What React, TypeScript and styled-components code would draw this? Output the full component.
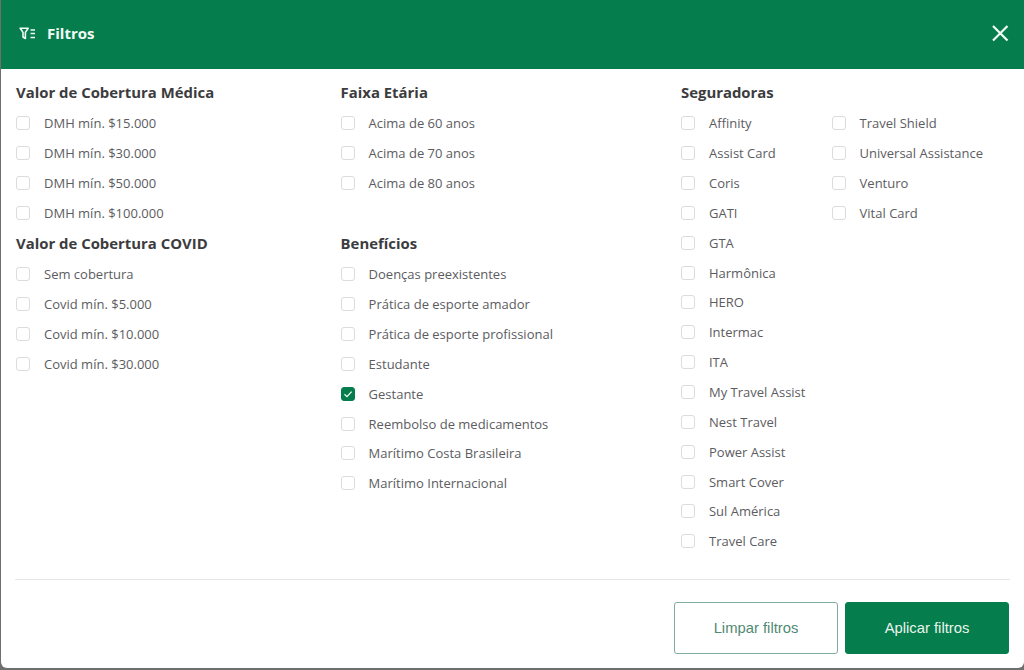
import React from 'react';
import styled, { createGlobalStyle } from 'styled-components';

const GlobalStyle = createGlobalStyle`
  html, body {
    margin: 0;
    padding: 0;
    background: #6f6f6f;
    font-family: 'Open Sans', sans-serif;
  }
  * { box-sizing: border-box; }
`;

const Modal = styled.div`
  width: 1023px;
  height: 668px;
  margin-left: 1px;
  background: #ffffff;
  border-radius: 0 0 6px 6px;
  overflow: hidden;
  display: flex;
  flex-direction: column;
`;

const Header = styled.header`
  height: 68.5px;
  flex-shrink: 0;
  background: #067d4c;
  display: flex;
  align-items: center;
  justify-content: space-between;
  padding: 0 14px 0 18px;
`;

const HeaderTitle = styled.div`
  display: flex;
  align-items: center;
  gap: 11px;
  color: #f2fbf6;
  font-size: 15px;
  font-weight: 700;
  margin-top: -2px;
`;

const CloseButton = styled.button`
  border: 0;
  padding: 0;
  margin-top: -2px;
  background: transparent;
  display: flex;
`;

const Body = styled.div`
  display: flex;
  padding: 8.5px 14px 0 14px;
  height: 510.5px;
`;

const Column = styled.div<{ $width: number }>`
  width: ${(p) => p.$width}px;
  flex-shrink: 0;
`;

const Heading = styled.h3`
  margin: 0;
  padding-left: 1px;
  height: 31.4px;
  line-height: 30.5px;
  font-size: 14.9px;
  font-weight: 700;
  color: #3c3c3e;
`;

const SubColumns = styled.div`
  display: flex;
`;

const SubColumn = styled.div`
  width: 150.6px;
`;

const Spacer = styled.div`
  height: 30px;
`;

const Row = styled.label`
  height: 29.86px;
  display: flex;
  align-items: center;
  gap: 14px;
  padding-left: 1px;
  font-size: 13px;
  white-space: nowrap;
  color: #5c5c5f;
`;

const Box = styled.span<{ $checked?: boolean }>`
  width: 14px;
  height: 14px;
  flex-shrink: 0;
  border-radius: 3px;
  display: flex;
  align-items: center;
  justify-content: center;
  border: 1.5px solid ${(p) => (p.$checked ? '#067d4c' : '#dcdcdc')};
  background: ${(p) => (p.$checked ? '#067d4c' : '#ffffff')};
`;

const Divider = styled.hr`
  margin: 0 14px;
  border: 0;
  height: 1px;
  background: #e6e6e6;
`;

const Footer = styled.footer`
  display: flex;
  justify-content: flex-end;
  gap: 7px;
  padding: 22px 15px 0 0;
`;

const ActionButton = styled.button<{ $primary?: boolean }>`
  width: 164px;
  height: 52px;
  padding: 0 0 1px;
  border-radius: 3px;
  font-family: 'Liberation Sans', Arial, sans-serif;
  font-size: 14.8px;
  border: 1px solid ${(p) => (p.$primary ? '#067d4c' : '#7fae9a')};
  background: ${(p) => (p.$primary ? '#067d4c' : '#ffffff')};
  color: ${(p) => (p.$primary ? '#e8f5ee' : '#4f8a72')};
`;

const Option = ({ label, checked }: { label: string; checked?: boolean }) => (
  <Row>
    <Box $checked={checked}>
      {checked && (
        <svg width="10" height="10" viewBox="0 0 10 10" fill="none">
          <path d="M1.5 5.3 4 7.6 8.6 2.6" stroke="#fff" strokeWidth="1.2" />
        </svg>
      )}
    </Box>
    {label}
  </Row>
);

const medica = ['DMH mín. $15.000', 'DMH mín. $30.000', 'DMH mín. $50.000', 'DMH mín. $100.000'];
const covid = ['Sem cobertura', 'Covid mín. $5.000', 'Covid mín. $10.000', 'Covid mín. $30.000'];
const faixa = ['Acima de 60 anos', 'Acima de 70 anos', 'Acima de 80 anos'];
const beneficios = [
  'Doenças preexistentes',
  'Prática de esporte amador',
  'Prática de esporte profissional',
  'Estudante',
  'Gestante',
  'Reembolso de medicamentos',
  'Marítimo Costa Brasileira',
  'Marítimo Internacional',
];
const seguradoras1 = [
  'Affinity',
  'Assist Card',
  'Coris',
  'GATI',
  'GTA',
  'Harmônica',
  'HERO',
  'Intermac',
  'ITA',
  'My Travel Assist',
  'Nest Travel',
  'Power Assist',
  'Smart Cover',
  'Sul América',
  'Travel Care',
];
const seguradoras2 = ['Travel Shield', 'Universal Assistance', 'Venturo', 'Vital Card'];

const renderOptions = (items: string[]) =>
  items.map((item) => <Option key={item} label={item} checked={item === 'Gestante'} />);

export default function App() {
  return (
    <>
      <GlobalStyle />
      <Modal>
        <Header>
          <HeaderTitle>
            <svg width="17" height="13" viewBox="0 0 17 13" fill="none" stroke="#f2fbf6">
              <path d="M1.2 1.2h8L6.4 5.4V11.5L4 10V5.4z" strokeWidth="1.6" strokeLinejoin="round" />
              <path d="M11.5 3H16M11.5 6.5H16M11.5 10.5H16" strokeWidth="1.3" />
            </svg>
            Filtros
          </HeaderTitle>
          <CloseButton aria-label="Fechar">
            <svg width="20" height="20" viewBox="0 0 20 20" fill="none" stroke="#f2fbf6" strokeWidth="2.2">
              <path d="M3 3 17.5 17.5M17.5 3 3 17.5" />
            </svg>
          </CloseButton>
        </Header>
        <Body>
          <Column $width={324.6}>
            <Heading>Valor de Cobertura Médica</Heading>
            {renderOptions(medica)}
            <Heading>Valor de Cobertura COVID</Heading>
            {renderOptions(covid)}
          </Column>
          <Column $width={340.4}>
            <Heading>Faixa Etária</Heading>
            {renderOptions(faixa)}
            <Spacer />
            <Heading>Benefícios</Heading>
            {renderOptions(beneficios)}
          </Column>
          <Column $width={302}>
            <Heading>Seguradoras</Heading>
            <SubColumns>
              <SubColumn>{renderOptions(seguradoras1)}</SubColumn>
              <SubColumn>{renderOptions(seguradoras2)}</SubColumn>
            </SubColumns>
          </Column>
        </Body>
        <Divider />
        <Footer>
          <ActionButton>Limpar filtros</ActionButton>
          <ActionButton $primary>Aplicar filtros</ActionButton>
        </Footer>
      </Modal>
    </>
  );
}
